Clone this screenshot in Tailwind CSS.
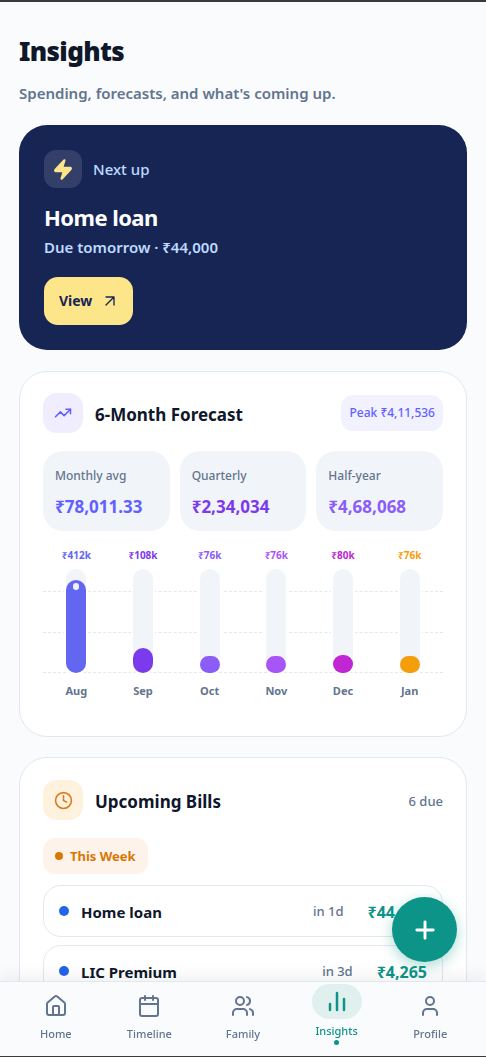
<!DOCTYPE html>
<html lang="en">
<head>
    <meta charset="UTF-8">
    <meta name="viewport" content="width=device-width, initial-scale=1.0">
    <title>Insights</title>
    <script src="https://cdn.jsdelivr.net/npm/@tailwindcss/browser@4"></script>
</head>
<body class="h-screen overflow-hidden border-t-2 border-[#3a3a3c] bg-[#fafbfd] font-['Noto_Sans','Open_Sans',sans-serif] text-slate-900">

    <main class="h-full overflow-y-auto px-[19px] pt-[31px] pb-28 [scrollbar-width:none]">
        <header>
            <h1 class="text-[26px] leading-9 font-black tracking-tight">Insights</h1>
            <p class="mt-3 text-[15px] leading-6 font-semibold text-slate-500">Spending, forecasts, and what's coming up.</p>
        </header>

        <!-- Next up -->
        <section class="mt-5 rounded-[28px] bg-[#172554] p-[25px]">
            <div class="flex items-center gap-[11px]">
                <span class="flex size-[38px] items-center justify-center rounded-xl bg-white/12">
                    <svg class="h-[23px] w-[22px] fill-[#fde68a] stroke-[#fde68a]" viewBox="0 0 24 24" preserveAspectRatio="none" stroke-width="1.5" stroke-linejoin="round"><path d="M4 14a1 1 0 0 1-.78-1.63l9.9-10.2a.5.5 0 0 1 .86.46l-1.92 6.02A1 1 0 0 0 13 10h7a1 1 0 0 1 .78 1.63l-9.9 10.2a.5.5 0 0 1-.86-.46l1.92-6.02A1 1 0 0 0 11 14z"/></svg>
                </span>
                <span class="text-[15px] leading-6 font-medium text-blue-200">Next up</span>
            </div>
            <h2 class="mt-[15px] text-[22px] leading-7 font-bold tracking-tight text-white">Home loan</h2>
            <p class="mt-1 text-[15px] leading-6 font-semibold text-blue-200">Due tomorrow · ₹44,000</p>
            <button type="button" class="mt-[18px] flex h-12 items-center gap-[10px] rounded-[14px] bg-[#fde68a] px-[15px] text-sm font-bold text-[#172554]">
                View
                <svg class="size-4" viewBox="0 0 24 24" fill="none" stroke="currentColor" stroke-width="2" stroke-linecap="round" stroke-linejoin="round"><path d="M6 6h12v12M6 18 18 6"/></svg>
            </button>
        </section>

        <!-- Forecast -->
        <section class="mt-[21px] rounded-[28px] border border-slate-200 bg-white px-[23px] pt-[21px] pb-[37px]">
            <div class="flex items-center gap-3">
                <span class="flex size-10 items-center justify-center rounded-[14px] bg-[#efedfe]">
                    <svg class="size-[18px] text-indigo-500" viewBox="0 0 24 24" fill="none" stroke="currentColor" stroke-width="2" stroke-linecap="round" stroke-linejoin="round"><path d="m22 7-8.5 8.5-5-5L2 17"/><path d="M16 7h6v6"/></svg>
                </span>
                <h2 class="flex-1 pt-1 text-[17px] leading-6 font-bold">6-Month Forecast</h2>
                <span class="rounded-xl bg-[#f2f1fe] px-2 py-2 text-xs leading-5 font-medium text-indigo-500">Peak ₹4,11,536</span>
            </div>
            <dl class="mt-[18px] grid grid-cols-3 gap-[10px]">
                <div class="rounded-[20px] bg-slate-100 px-3 pt-[15px] pb-3">
                    <dt class="text-xs leading-5 font-medium text-slate-500">Monthly avg</dt>
                    <dd class="mt-[9px] text-[17px] leading-6 font-bold text-indigo-500">₹78,011.33</dd>
                </div>
                <div class="rounded-[20px] bg-slate-100 px-3 pt-[15px] pb-3">
                    <dt class="text-xs leading-5 font-medium text-slate-500">Quarterly</dt>
                    <dd class="mt-[9px] text-[17px] leading-6 font-bold text-[#7c3aed]">₹2,34,034</dd>
                </div>
                <div class="rounded-[20px] bg-slate-100 px-3 pt-[15px] pb-3">
                    <dt class="text-xs leading-5 font-medium text-slate-500">Half-year</dt>
                    <dd class="mt-[9px] text-[17px] leading-6 font-bold text-[#8b5cf6]">₹4,68,068</dd>
                </div>
            </dl>
            <div class="relative mt-4">
                <!-- grid lines behind the bars -->
                <div class="absolute inset-x-0 top-11 flex h-[82px] flex-col justify-between">
                    <div class="border-t border-dashed border-slate-200"></div>
                    <div class="border-t border-dashed border-slate-200"></div>
                    <div class="border-t border-dashed border-slate-200"></div>
                </div>
                <div id="chart" class="relative grid grid-cols-6"></div>
            </div>
        </section>

        <!-- Bills -->
        <section class="mt-5 rounded-[28px] border border-slate-200 bg-white px-[23px] pt-[22px] pb-6">
            <div class="flex items-center gap-3">
                <span class="flex size-10 items-center justify-center rounded-[14px] bg-[#fef1dd]">
                    <svg class="size-[19px] text-[#dd7a1f]" viewBox="0 0 24 24" fill="none" stroke="currentColor" stroke-width="2" stroke-linecap="round" stroke-linejoin="round"><circle cx="12" cy="12" r="10"/><path d="M12 6v6l4 2"/></svg>
                </span>
                <h2 class="flex-1 pt-1 text-[17px] leading-6 font-bold">Upcoming Bills</h2>
                <span class="pt-[2px] text-[13px] leading-5 font-medium text-slate-500">6 due</span>
            </div>
            <h3 class="mt-[18px] flex w-fit items-center gap-[7px] rounded-xl bg-[#fdf3ea] px-3 py-2 text-[13px] leading-5 font-bold text-[#d97706]">
                <span class="size-2 rounded-full bg-[#d97706]"></span>
                This Week
            </h3>
            <ul class="mt-[11px] grid gap-2">
                <li class="flex h-[52px] items-center rounded-[18px] border border-slate-200 px-[15px]">
                    <span class="mr-3 size-[10px] rounded-full bg-[#2563eb]"></span>
                    <span class="flex-1 pt-[2px] text-[15px] font-bold">Home loan</span>
                    <span class="mr-6 pt-[2px] text-[13px] font-medium text-slate-500">in 1d</span>
                    <span class="pt-[2px] text-base font-bold text-[#0d9488]">₹44,000</span>
                </li>
                <li class="flex h-[52px] items-center rounded-[18px] border border-slate-200 px-[15px]">
                    <span class="mr-3 size-[10px] rounded-full bg-[#2563eb]"></span>
                    <span class="flex-1 pt-[2px] text-[15px] font-bold">LIC Premium</span>
                    <span class="mr-6 pt-[2px] text-[13px] font-medium text-slate-500">in 3d</span>
                    <span class="pt-[2px] text-base font-bold text-[#0d9488]">₹4,265</span>
                </li>
            </ul>
        </section>
    </main>

    <button type="button" aria-label="Add" class="fixed right-[29px] bottom-[95px] flex size-[65px] items-center justify-center rounded-full bg-[#0d9488] text-white shadow-[0_4px_14px_rgba(13,148,136,0.35)]">
        <svg class="size-7" viewBox="0 0 24 24" fill="none" stroke="currentColor" stroke-width="2.5" stroke-linecap="round"><path d="M5 12h14M12 5v14"/></svg>
    </button>

    <nav class="fixed inset-x-0 bottom-0 grid h-[76px] grid-cols-5 border-t border-b border-t-slate-200 border-b-[#3a3a3c] bg-[#fafbfd] px-[9px] text-[11px] leading-4 font-medium text-slate-500 shadow-[0_-4px_16px_rgba(15,23,42,0.07)]">
        <a href="#home" class="flex flex-col items-center gap-2 pt-3">
            <svg class="size-6" viewBox="0 0 24 24" fill="none" stroke="currentColor" stroke-width="2" stroke-linecap="round" stroke-linejoin="round"><path d="M15 21v-8a1 1 0 0 0-1-1h-4a1 1 0 0 0-1 1v8"/><path d="M3 10a2 2 0 0 1 .71-1.53l7-6a2 2 0 0 1 2.58 0l7 6A2 2 0 0 1 21 10v9a2 2 0 0 1-2 2H5a2 2 0 0 1-2-2z"/></svg>
            Home
        </a>
        <a href="#timeline" class="flex flex-col items-center gap-2 pt-3">
            <svg class="size-6" viewBox="0 0 24 24" fill="none" stroke="currentColor" stroke-width="2" stroke-linecap="round" stroke-linejoin="round"><path d="M8 2v4M16 2v4M3 10h18"/><rect x="3" y="4" width="18" height="18" rx="2"/></svg>
            Timeline
        </a>
        <a href="#family" class="flex flex-col items-center gap-2 pt-3">
            <svg class="size-6" viewBox="0 0 24 24" fill="none" stroke="currentColor" stroke-width="2" stroke-linecap="round" stroke-linejoin="round"><path d="M16 21v-2a4 4 0 0 0-4-4H6a4 4 0 0 0-4 4v2M22 21v-2a4 4 0 0 0-3-3.87M16 3.13a4 4 0 0 1 0 7.75"/><circle cx="9" cy="7" r="4"/></svg>
            Family
        </a>
        <a href="#insights" aria-current="page" class="flex flex-col items-center pt-[2px] text-[#0d9488]">
            <span class="flex h-[35px] w-[50px] items-center justify-center rounded-full bg-[#e0f0ee]">
                <svg class="size-6" viewBox="0 0 24 24" fill="none" stroke="currentColor" stroke-width="2.5" stroke-linecap="round"><path d="M5 20v-6M12 20V3M19 20V9"/></svg>
            </span>
            <span class="mt-1">Insights</span>
            <span class="mt-[1px] size-[5px] rounded-full bg-[#0d9488]"></span>
        </a>
        <a href="#profile" class="flex flex-col items-center gap-2 pt-3">
            <svg class="size-6" viewBox="0 0 24 24" fill="none" stroke="currentColor" stroke-width="2" stroke-linecap="round" stroke-linejoin="round"><path d="M19 21v-2a4 4 0 0 0-4-4H9a4 4 0 0 0-4 4v2"/><circle cx="12" cy="7" r="4"/></svg>
            Profile
        </a>
    </nav>

    <script>
        // bar heights are percentages of the track
        const months = [
            { name: "Aug", label: "₹412k", height: 89, color: "#6366f1", peak: true },
            { name: "Sep", label: "₹108k", height: 24, color: "#7c3aed" },
            { name: "Oct", label: "₹76k", height: 16, color: "#8b5cf6" },
            { name: "Nov", label: "₹76k", height: 16, color: "#a855f7" },
            { name: "Dec", label: "₹80k", height: 17, color: "#c026d3" },
            { name: "Jan", label: "₹76k", height: 16, color: "#f59e0b" }
        ];

        document.getElementById('chart').innerHTML = months.map(m => `
            <div class="flex flex-col items-center">
                <span class="text-[10px] leading-4 font-bold" style="color: ${m.color}">${m.label}</span>
                <div class="mt-[6px] flex h-[104px] w-5 flex-col justify-end rounded-full bg-slate-100 ring-2 ring-white">
                    <div class="flex justify-center rounded-full pt-[3px]" style="height: ${m.height}%; background: ${m.color}">
                        ${m.peak ? '<span class="h-[7px] w-[6px] rounded-full bg-white/90"></span>' : ''}
                    </div>
                </div>
                <span class="mt-[10px] text-[11px] leading-4 font-bold text-slate-500">${m.name}</span>
            </div>
        `).join('');
    </script>
</body>
</html>
